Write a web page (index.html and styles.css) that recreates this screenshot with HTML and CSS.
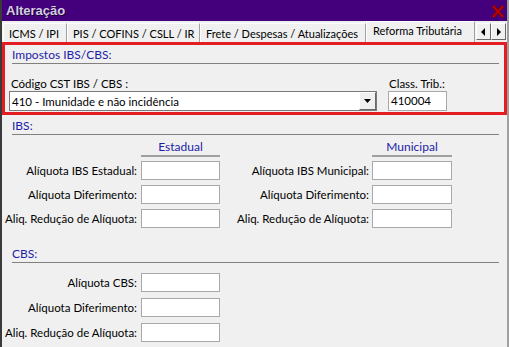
FILE: index.html
```html
<!DOCTYPE html>
<html lang="pt-BR">
<head>
  <meta charset="UTF-8">
  <title>Alteração</title>
  <link rel="stylesheet" href="styles.css">
</head>
<body>

<div id="window">
  <div class="titlebar">
    <span class="title">Alteração</span>
    <svg class="close" width="14" height="13" viewBox="0 0 14 13">
      <path d="M2 1 L12 12 M12 1 L2 12" stroke="#7a0000" stroke-width="3.2"/>
      <path d="M2 1 L12 12 M12 1 L2 12" stroke="#c40000" stroke-width="1.6"/>
    </svg>
  </div>

  <div class="tabs">
    <div class="tab tab-icms">ICMS / IPI</div>
    <div class="tab tab-pis">PIS / COFINS / CSLL / IR</div>
    <div class="tab tab-frete">Frete / Despesas / Atualizações</div>
    <div class="tab tab-reforma active">Reforma Tributária</div>
    <div class="tab-scroll">
      <span class="arrow"><svg width="5" height="8" viewBox="0 0 5 8"><path d="M4 0 V8 L0 4 Z" fill="#000"/></svg></span>
      <span class="arrow"><svg width="5" height="8" viewBox="0 0 5 8"><path d="M1 0 V8 L5 4 Z" fill="#000"/></svg></span>
    </div>
  </div>

  <div class="page">
    <div class="highlight">
      <div class="group-title">Impostos IBS/CBS:</div>
      <div class="cst-row">
        <div class="field">
          <label>Código CST IBS / CBS :</label>
          <div class="combo">
            <span class="combo-text">410 - Imunidade e não incidência</span>
            <span class="combo-btn"><svg width="7" height="4" viewBox="0 0 7 4"><path d="M0 0 H7 L3.5 4 Z" fill="#000"/></svg></span>
          </div>
        </div>
        <div class="field class-trib">
          <label>Class. Trib.:</label>
          <div class="box">410004</div>
        </div>
      </div>
    </div>

    <div class="group-title section">IBS:</div>
    <div class="rates ibs">
      <div class="col-head c2">Estadual</div>
      <div class="col-head c4">Municipal</div>

      <label>Alíquota IBS Estadual:</label><div class="box"></div>
      <label class="right">Alíquota IBS Municipal:</label><div class="box"></div>

      <label>Alíquota Diferimento:</label><div class="box"></div>
      <label class="right">Alíquota Diferimento:</label><div class="box"></div>

      <label>Aliq. Redução de Alíquota:</label><div class="box"></div>
      <label class="right">Aliq. Redução de Alíquota:</label><div class="box"></div>
    </div>

    <div class="group-title section cbs-title">CBS:</div>
    <div class="rates cbs">
      <label>Alíquota CBS:</label><div class="box"></div>
      <label>Alíquota Diferimento:</label><div class="box"></div>
      <label>Aliq. Redução de Alíquota:</label><div class="box"></div>
    </div>
  </div>
</div>

</body>
</html>
```

FILE: styles.css
```css
body {
  margin: 0;
  font-family: Lato, "Liberation Sans", sans-serif;
  font-size: 11.5px;
  color: #000;
  background-color: #f0f0f0;
}

#window {
  width: 509px;
  height: 347px;
  box-sizing: border-box;
  border-left: 2px solid #3a3a3a;
  border-right: 2px solid #a0a0a0;
  background-color: #f0f0f0;
  overflow: hidden;
}

.titlebar {
  height: 21px;
  margin: 0 -2px;
  padding: 0 4px 0 6px;
  background-color: #44007c;
  display: flex;
  align-items: center;
  justify-content: space-between;
}

.title {
  font-family: "Liberation Sans", sans-serif;
  font-weight: bold;
  font-size: 13px;
  color: #d4cce4;
  text-shadow: 1px 1px 0 #1c0036;
}

.close {
  margin-top: 1px;
}

/* tabs */
.tabs {
  height: 21px;
  display: flex;
  align-items: flex-end;
  padding-left: 1px;
}

.tab {
  height: 19px;
  line-height: 19px;
  padding-left: 5px;
  box-sizing: border-box;
  border-top: 1px solid #fff;
  border-left: 1px solid #fff;
  border-right: 1px solid #a0a0a0;
  font-size: 11px;
  white-space: nowrap;
  overflow: hidden;
}

.tab-icms { width: 64px; }
.tab-pis { width: 133px; }
.tab-frete { width: 166px; }
.tab-reforma { width: 109px; padding-left: 6px; }

.tab.active {
  height: 21px;
  line-height: 17px;
}

.tab-scroll {
  display: flex;
  margin-left: auto;
  margin-right: 1px;
  align-self: center;
}

.arrow {
  width: 15px;
  height: 17px;
  box-sizing: border-box;
  border: 1px solid;
  border-color: #fff #696969 #696969 #fff;
  display: flex;
  align-items: center;
  justify-content: center;
}

/* red frame */
.highlight {
  border: 3px solid #e41d22;
  height: 73px;
  box-sizing: border-box;
  padding: 2px 5px 0 4px;
}

.group-title {
  color: #1d1da8;
  font-size: 12px;
  line-height: 16px;
  margin: 0 0 0 3px;
  border-bottom: 1px solid #808080;
}

.cst-row {
  display: flex;
  align-items: flex-end;
  margin-top: 13px;
}

.field label {
  display: block;
  padding-left: 2px;
  line-height: 14px;
}

.combo {
  width: 368px;
  height: 20px;
  box-sizing: border-box;
  border: 1px solid #7a7a7a;
  background-color: #fff;
  display: flex;
  align-items: center;
  justify-content: space-between;
}

.combo-text {
  padding-left: 2px;
}

.combo-btn {
  width: 17px;
  height: 18px;
  box-sizing: border-box;
  border: 1px solid;
  border-color: #fff #696969 #696969 #fff;
  background-color: #f0f0f0;
  display: flex;
  align-items: center;
  justify-content: center;
}

.class-trib {
  margin-left: 11px;
}

.class-trib label {
  padding-left: 1px;
}

.box {
  height: 19px;
  box-sizing: border-box;
  border: 1px solid #a9a9a9;
  background-color: #fff;
  padding-left: 2px;
  line-height: 17px;
}

.class-trib .box {
  width: 59px;
  height: 20px;
}

/* IBS / CBS grids */
.page .section {
  margin: 3px 8px 0 10px;
}

.page .cbs-title {
  margin-top: 18px;
}

.rates {
  display: grid;
  grid-template-columns: 139px 79px 152px 80px;
  row-gap: 5px;
  align-items: center;
}

.rates label {
  text-align: right;
  padding-right: 4px;
  white-space: nowrap;
}

.rates label.right {
  padding-right: 3px;
}

.col-head {
  color: #1d1da8;
  font-size: 12px;
  text-align: center;
  line-height: 16px;
  margin-top: 4px;
  border-bottom: 2px solid #a0a0a0;
  margin-bottom: -1px;
}

.col-head.c2 {
  grid-column: 2;
}

.col-head.c4 {
  grid-column: 4;
}

.cbs {
  grid-template-columns: 139px 79px;
  margin-top: 10px;
  row-gap: 6px;
}
```
